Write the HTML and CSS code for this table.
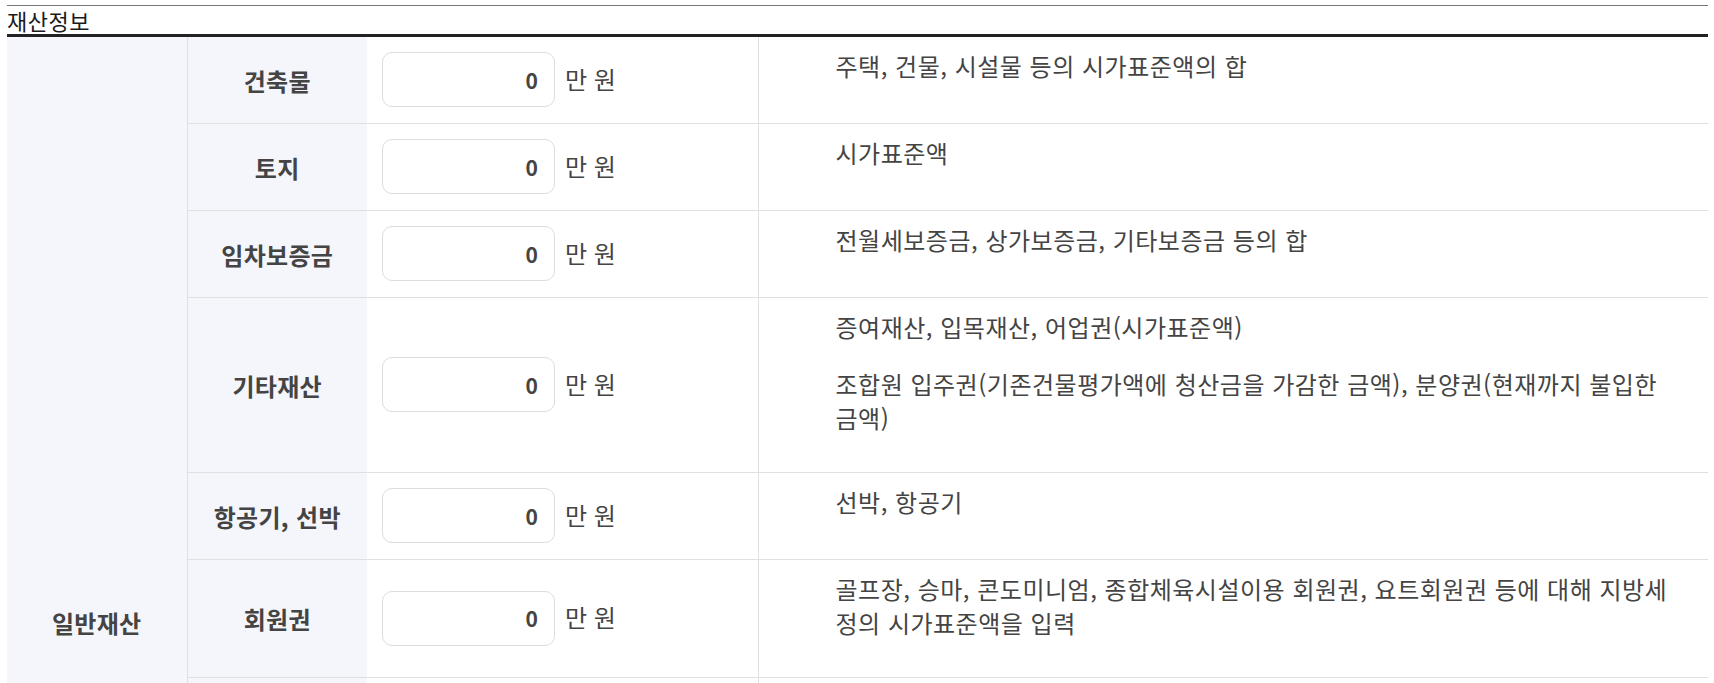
FILE: index.html
```html
<!DOCTYPE html>
<html lang="ko">
<head>
<meta charset="utf-8">
<title>재산정보</title>
<link rel="stylesheet" href="styles.css">
</head>
<body>
<div class="wrap">
  <div class="section-title">재산정보</div>
  <table class="asset-table">
    <colgroup>
      <col class="c-group">
      <col class="c-label">
      <col class="c-input">
      <col class="c-desc">
    </colgroup>
    <tbody>
      <tr>
        <th class="group" rowspan="12">일반재산</th>
        <th class="label">건축물</th>
        <td class="amount"><div class="amount-box"><input class="num" type="text" value="0"><span class="unit">만 원</span></div></td>
        <td class="desc"><p>주택, 건물, 시설물 등의 시가표준액의 합</p></td>
      </tr>
      <tr>
        <th class="label">토지</th>
        <td class="amount"><div class="amount-box"><input class="num" type="text" value="0"><span class="unit">만 원</span></div></td>
        <td class="desc"><p>시가표준액</p></td>
      </tr>
      <tr>
        <th class="label">임차보증금</th>
        <td class="amount"><div class="amount-box"><input class="num" type="text" value="0"><span class="unit">만 원</span></div></td>
        <td class="desc"><p>전월세보증금, 상가보증금, 기타보증금 등의 합</p></td>
      </tr>
      <tr>
        <th class="label">기타재산</th>
        <td class="amount"><div class="amount-box"><input class="num" type="text" value="0"><span class="unit">만 원</span></div></td>
        <td class="desc"><p>증여재산, 입목재산, 어업권(시가표준액)</p><p>조합원 입주권(기존건물평가액에 청산금을 가감한 금액), 분양권(현재까지 불입한 금액)</p></td>
      </tr>
      <tr>
        <th class="label">항공기, 선박</th>
        <td class="amount"><div class="amount-box"><input class="num" type="text" value="0"><span class="unit">만 원</span></div></td>
        <td class="desc"><p>선박, 항공기</p></td>
      </tr>
      <tr>
        <th class="label">회원권</th>
        <td class="amount"><div class="amount-box"><input class="num" type="text" value="0"><span class="unit">만 원</span></div></td>
        <td class="desc"><p>골프장, 승마, 콘도미니엄, 종합체육시설이용 회원권, 요트회원권 등에 대해 지방세정의 시가표준액을 입력</p></td>
      </tr>
      <tr>
        <th class="label">자동차</th>
        <td class="amount"><div class="amount-box"><input class="num" type="text" value="0"><span class="unit">만 원</span></div></td>
        <td class="desc"><p>자동차 시가표준액</p></td>
      </tr>
      <tr>
        <th class="label">현금</th>
        <td class="amount"><div class="amount-box"><input class="num" type="text" value="0"><span class="unit">만 원</span></div></td>
        <td class="desc"><p>보유 현금</p></td>
      </tr>
      <tr>
        <th class="label">예금</th>
        <td class="amount"><div class="amount-box"><input class="num" type="text" value="0"><span class="unit">만 원</span></div></td>
        <td class="desc"><p>예금, 적금 등의 잔액</p></td>
      </tr>
      <tr>
        <th class="label">보험</th>
        <td class="amount"><div class="amount-box"><input class="num" type="text" value="0"><span class="unit">만 원</span></div></td>
        <td class="desc"><p>보험 해약환급금</p></td>
      </tr>
      <tr>
        <th class="label">주식</th>
        <td class="amount"><div class="amount-box"><input class="num" type="text" value="0"><span class="unit">만 원</span></div></td>
        <td class="desc"><p>주식, 채권 등의 평가액</p></td>
      </tr>
      <tr class="row-last">
        <th class="label">기타</th>
        <td class="amount"><div class="amount-box"><input class="num" type="text" value="0"><span class="unit">만 원</span></div></td>
        <td class="desc"><p>그 밖의 재산</p></td>
      </tr>
    </tbody>
  </table>
</div>
</body>
</html>
```

FILE: styles.css
```css
html, body {
  margin: 0;
  padding: 0;
  background: #ffffff;
}

body {
  font-family: "Noto Sans CJK KR", "Noto Sans", sans-serif;
  color: #444444;
}

.wrap {
  padding: 5px 0 0 7px;
  width: 1701px;
}

.section-title {
  border-top: 1px solid #777777;
  font-size: 22px;
  line-height: 28px;
  height: 28px;
  color: #1a1a1a;
  font-weight: 400;
  letter-spacing: 0.5px;
}

.asset-table {
  width: 1701px;
  border-collapse: collapse;
  border-top: 3px solid #222222;
  table-layout: fixed;
}

.c-group { width: 180px; }
.c-label { width: 180px; }
.c-input { width: 391px; }
.c-desc { width: 950px; }

.asset-table th,
.asset-table td {
  padding: 0;
  border-bottom: 1px solid #e0e0e0;
}

.row-last {
  height: 96px;
}

.group {
  background: #f5f6fb;
  border-right: 1px solid #e0e0e0;
  font-size: 24px;
  font-weight: 700;
  color: #444444;
  text-align: center;
  vertical-align: middle;
  letter-spacing: 0.3px;
}

.label {
  background: #f5f6fb;
  font-size: 24px;
  font-weight: 700;
  color: #444444;
  text-align: center;
  vertical-align: middle;
  letter-spacing: 0.3px;
}

.asset-table .amount {
  border-right: 1px solid #e0e0e0;
  vertical-align: middle;
  padding: 15px 0 16px 15px;
}

.amount-box {
  display: flex;
  align-items: baseline;
}

.num {
  box-sizing: border-box;
  width: 173px;
  height: 55px;
  border: 1px solid #dddddd;
  border-radius: 10px;
  padding: 0 16px 0 10px;
  text-align: right;
  font-family: "Noto Sans CJK KR", "Noto Sans", sans-serif;
  font-size: 21px;
  font-weight: 700;
  color: #444444;
  background: #ffffff;
  outline: none;
}

.unit {
  margin-left: 10px;
  font-size: 24px;
  line-height: 33px;
  color: #444444;
}

.asset-table .desc {
  vertical-align: top;
  padding: 12px 28px 14px 77px;
  font-size: 24px;
  line-height: 34px;
  color: #444444;
  letter-spacing: 0.5px;
}

.desc p {
  margin: 0 0 23px 0;
}
```
